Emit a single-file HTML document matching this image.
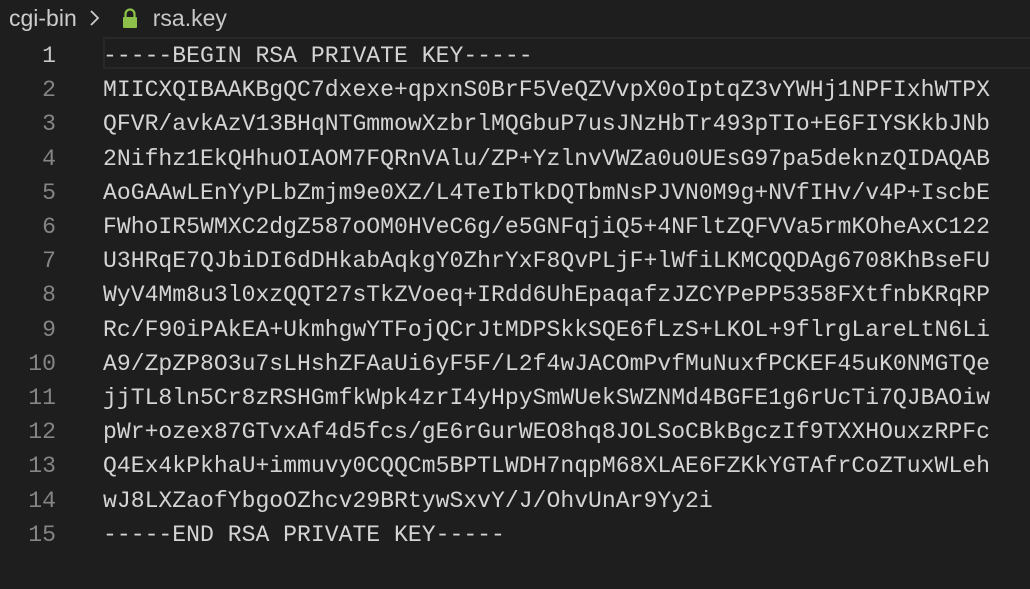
<!DOCTYPE html>
<html><head><style>
body{margin:0;width:1030px;height:589px;background:#1e1e1e;overflow:hidden;font-family:"Liberation Sans",sans-serif}
.bc{position:absolute;top:4px;left:9px;height:28px;color:#cccccc;font-size:23px;display:flex;align-items:center}
.hl{position:absolute;left:103px;top:37px;width:940px;height:32px;border:2px solid #282828;box-sizing:border-box}
.code{position:absolute;top:39px;left:0;font-family:"Liberation Mono",monospace;font-size:23.1px;line-height:34.2px;color:#d4d4d4;white-space:pre}
.ln{display:inline-block;width:56px;text-align:right;color:#858585;margin-right:47px}
.a{color:#c6c6c6}
</style></head><body>
<div class="bc">cgi-bin<svg width="16" height="22" viewBox="0 0 16 22" style="margin:0 18px 0 10px"><path d="M4 4l7 7-7 7" stroke="#ccc" stroke-width="1.8" fill="none"/></svg>
<svg width="18" height="22" viewBox="0 0 18 22" style="margin-right:14px"><path d="M4.5 10V7a4.5 4.5 0 0 1 9 0v3" stroke="#8dc149" stroke-width="2.2" fill="none"/><rect x="2" y="10" width="14" height="11" rx="1" fill="#8dc149"/></svg><span style="color:#c8c8c8">rsa.key</span></div>
<div class="hl"></div>
<div class="code"><span class="ln a">1</span>-----BEGIN RSA PRIVATE KEY-----
<span class="ln">2</span>MIICXQIBAAKBgQC7dxexe+qpxnS0BrF5VeQZVvpX0oIptqZ3vYWHj1NPFIxhWTPX
<span class="ln">3</span>QFVR/avkAzV13BHqNTGmmowXzbrlMQGbuP7usJNzHbTr493pTIo+E6FIYSKkbJNb
<span class="ln">4</span>2Nifhz1EkQHhuOIAOM7FQRnVAlu/ZP+YzlnvVWZa0u0UEsG97pa5deknzQIDAQAB
<span class="ln">5</span>AoGAAwLEnYyPLbZmjm9e0XZ/L4TeIbTkDQTbmNsPJVN0M9g+NVfIHv/v4P+IscbE
<span class="ln">6</span>FWhoIR5WMXC2dgZ587oOM0HVeC6g/e5GNFqjiQ5+4NFltZQFVVa5rmKOheAxC122
<span class="ln">7</span>U3HRqE7QJbiDI6dDHkabAqkgY0ZhrYxF8QvPLjF+lWfiLKMCQQDAg6708KhBseFU
<span class="ln">8</span>WyV4Mm8u3l0xzQQT27sTkZVoeq+IRdd6UhEpaqafzJZCYPePP5358FXtfnbKRqRP
<span class="ln">9</span>Rc/F90iPAkEA+UkmhgwYTFojQCrJtMDPSkkSQE6fLzS+LKOL+9flrgLareLtN6Li
<span class="ln">10</span>A9/ZpZP8O3u7sLHshZFAaUi6yF5F/L2f4wJACOmPvfMuNuxfPCKEF45uK0NMGTQe
<span class="ln">11</span>jjTL8ln5Cr8zRSHGmfkWpk4zrI4yHpySmWUekSWZNMd4BGFE1g6rUcTi7QJBAOiw
<span class="ln">12</span>pWr+ozex87GTvxAf4d5fcs/gE6rGurWEO8hq8JOLSoCBkBgczIf9TXXHOuxzRPFc
<span class="ln">13</span>Q4Ex4kPkhaU+immuvy0CQQCm5BPTLWDH7nqpM68XLAE6FZKkYGTAfrCoZTuxWLeh
<span class="ln">14</span>wJ8LXZaofYbgoOZhcv29BRtywSxvY/J/OhvUnAr9Yy2i
<span class="ln">15</span>-----END RSA PRIVATE KEY-----</div>
</body></html>
